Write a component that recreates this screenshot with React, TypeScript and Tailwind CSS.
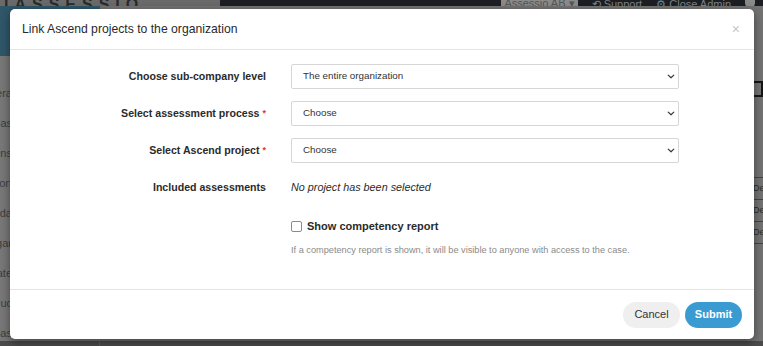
import { useState } from "react";

const sideWords = ["Genera", "Uppgiftsbas", "Kompetens", "Rapport", "Anställda", "Inställningar", "Kandidate", "Produc", "Projektbas"];

function Chevron() {
  return (
    <svg viewBox="0 0 10 6" className="h-[5px] w-[8px] text-[#3a3a3a]" fill="none" stroke="currentColor" strokeWidth={1.5} strokeLinecap="round" strokeLinejoin="round">
      <path d="M1.5 1.2 5 4.6l3.5-3.4" />
    </svg>
  );
}

function Field({ value }: { value: string }) {
  return (
    <button
      type="button"
      className="flex h-[25px] w-full items-center justify-between rounded-[2px] border border-[#d6d6d6] bg-white pl-[11px] pr-[3px] text-[9.8px] text-[#333]"
    >
      <span>{value}</span>
      <Chevron />
    </button>
  );
}

function Label({ text, required }: { text: string; required?: boolean }) {
  return (
    <div className="flex h-[25px] items-center justify-end text-[10.6px] font-bold text-[#2b2b2b]">
      {text}
      {required && <span className="ml-[3px] text-[9px] text-[#d9363e]">*</span>}
    </div>
  );
}

export default function App() {
  const [showReport, setShowReport] = useState(false);

  return (
    <div className="relative h-[346px] w-[763px] overflow-hidden bg-[#747474] font-['Liberation_Sans',Arial,sans-serif]">
      {/* page behind the overlay */}
      <div className="flex h-full flex-col">
        <div className="flex h-[10px] items-start overflow-hidden bg-[#1b1f23]">
          <div className="h-full w-[220px] overflow-hidden bg-[#6a6a6a] pl-[4px] text-[16px] font-bold leading-[10px] tracking-[6px] text-[#2a2a2a]">
            IASSESSIO
          </div>
          <div className="ml-auto flex items-start gap-[14px] pr-[8px] text-[11px] leading-[8px] text-[#7d8287]">
            <span className="-mt-[1px] bg-[#8a8a8a] px-[3px] text-[#555]">Assessio AB ▾</span>
            <span>⟲ Support</span>
            <span>⚙ Close Admin</span>
            <span className="h-[8px] w-[10px] rounded-b-full bg-[#8a8a8a]" />
          </div>
        </div>
        <div className="flex flex-1">
          <div className="flex w-[100px] flex-col bg-[#787878]">
            <div className="h-[50px] bg-[#2f5769]" />
            <div className="flex flex-col items-end gap-[15px] pt-[30px] pr-[88px] text-[11px] leading-[15px] text-[#3d3d3d]">
              {sideWords.map((w) => (
                <span key={w} className="whitespace-nowrap">{w}</span>
              ))}
            </div>
          </div>
          <div className="flex flex-1 flex-col items-end bg-[#737373] pt-[75px]">
            <div className="h-[16px] w-[14px] border-2 border-[#151515]" />
            <div className="mt-[80px] flex w-[10px] flex-col text-[9px] leading-[21px] text-[#2c2c2c]">
              <span className="border-y border-[#444]">De</span>
              <span className="border-b border-[#444]">De</span>
              <span className="border-b border-[#444]">De</span>
            </div>
          </div>
        </div>
        <div className="flex h-[7px] bg-[#4b4b4b]">
          <div className="w-[100px] border-r border-[#5c5c5c]" />
        </div>
      </div>

      {/* modal */}
      <div className="absolute left-[10px] top-[9px] flex h-[330px] w-[744px] flex-col rounded-[5px] bg-white shadow-[0_3px_10px_rgba(0,0,0,0.45)]">
        <div className="flex h-[41px] items-center justify-between border-b border-[#e5e5e5] pl-[12px] pr-[14px]">
          <h2 className="text-[12.2px] text-[#2a2a2a]">Link Ascend projects to the organization</h2>
          <button type="button" className="text-[14px] leading-none text-[#c6c6c6]">×</button>
        </div>

        <div className="flex-1 pt-[14px]">
          <div className="grid grid-cols-[256px_388px] gap-x-[25px] gap-y-[12px]">
            <Label text="Choose sub-company level" />
            <Field value="The entire organization" />
            <Label text="Select assessment process" required />
            <Field value="Choose" />
            <Label text="Select Ascend project" required />
            <Field value="Choose" />
            <Label text="Included assessments" />
            <div className="flex h-[25px] items-center text-[10.8px] italic text-[#2b2b2b]">No project has been selected</div>
            <div />
            <div className="pt-[6px]">
              <label className="flex items-center gap-[5px] text-[11px] font-bold text-[#2b2b2b]">
                <input
                  type="checkbox"
                  checked={showReport}
                  onChange={() => setShowReport(!showReport)}
                  className="h-[11px] w-[11px] appearance-none rounded-[2px] border border-[#8a8a8a] bg-white"
                />
                Show competency report
              </label>
              <p className="mt-[9px] text-[9.2px] text-[#8a8a8a]">
                If a competency report is shown, it will be visible to anyone with access to the case.
              </p>
            </div>
          </div>
        </div>

        <div className="flex h-[50px] items-center justify-end gap-[5px] border-t border-[#e5e5e5] pr-[12px]">
          <button type="button" className="h-[26px] w-[57px] rounded-full bg-[#efefef] text-[11px] text-[#333]">
            Cancel
          </button>
          <button type="button" className="h-[26px] w-[57px] rounded-full bg-[#3a9bd2] text-[11px] font-semibold text-white">
            Submit
          </button>
        </div>
      </div>
    </div>
  );
}
